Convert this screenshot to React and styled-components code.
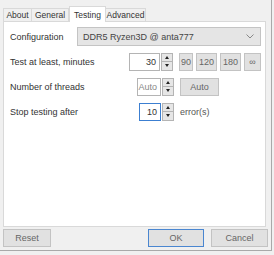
import React from "react";
import styled, { createGlobalStyle } from "styled-components";

const GlobalStyle = createGlobalStyle`
  html, body {
    margin: 0;
    padding: 0;
    background: #f0f0f0;
  }
  body {
    font-family: "Liberation Sans", Arial, sans-serif;
    font-size: 9px;
    color: #333;
  }
`;

const Window = styled.div`
  width: 271px;
  height: 250px;
  border-right: 1px solid #a9a9a9;
  border-bottom: 1px solid #a9a9a9;
  display: flex;
  flex-direction: column;
  background: #f0f0f0;
`;

const TabStrip = styled.div`
  height: 21px;
  display: flex;
  align-items: flex-end;
  padding-left: 3px;
`;

const Tab = styled.div`
  width: ${(p) => p.w}px;
  height: ${(p) => (p.active ? 16 : 13)}px;
  box-sizing: border-box;
  display: flex;
  align-items: center;
  justify-content: center;
  font-size: 8.5px;
  border: 1px solid #d9d9d9;
  border-bottom: none;
  border-left-width: ${(p) => (p.first || p.active ? 1 : 0)}px;
  background: ${(p) => (p.active ? "#fff" : "#f0f0f0")};
  margin-bottom: ${(p) => (p.active ? -1 : 0)}px;
  position: relative;
  z-index: ${(p) => (p.active ? 1 : 0)};
`;

const Panel = styled.div`
  margin: 0 5px 0 3px;
  height: 199px;
  background: #fff;
  border: 1px solid #d9d9d9;
  padding: 5px 4px 0 6px;
  display: flex;
  flex-direction: column;
  gap: 6px;
`;

const Row = styled.div`
  display: flex;
  align-items: center;
  height: 19px;
`;

const Label = styled.div`
  width: ${(p) => p.w || 119}px;
  flex-shrink: 0;
`;

const Select = styled.div`
  flex: 1;
  height: 17px;
  background: #e5e5e5;
  border: 1px solid #c4c4c4;
  display: flex;
  align-items: center;
  justify-content: space-between;
  padding: 0 6px 0 5px;
  color: #444;
`;

const SpinBox = styled.div`
  width: 45px;
  display: flex;
  justify-content: flex-end;
  align-items: center;
  gap: 1px;
`;

const Field = styled.div`
  width: ${(p) => p.w}px;
  height: 18px;
  border: 1px solid ${(p) => (p.focused ? "#3c7fd1" : "#b4b4b4")};
  display: flex;
  align-items: center;
  justify-content: flex-end;
  padding-right: 3px;
  box-sizing: border-box;
  color: ${(p) => (p.dim ? "#888" : "#333")};
  background: #fff;
`;

const Spinner = styled.div`
  width: 12px;
  height: 18px;
  display: flex;
  flex-direction: column;
`;

const SpinHalf = styled.div`
  flex: 1;
  background: #e6e6e6;
  border: 1px solid #b4b4b4;
  border-top-width: ${(p) => (p.down ? 0 : 1)}px;
  display: flex;
  align-items: center;
  justify-content: center;
`;

const Arrow = styled.div`
  width: 0;
  height: 0;
  border-left: 2.5px solid transparent;
  border-right: 2.5px solid transparent;
  ${(p) =>
    p.down
      ? "border-top: 3px solid #222;"
      : "border-bottom: 3px solid #222;"}
`;

const Button = styled.div`
  height: 18px;
  width: ${(p) => p.w}px;
  box-sizing: border-box;
  background: #e1e1e1;
  border: 1px solid ${(p) => (p.primary ? "#4a86d0" : "#c3c3c3")};
  display: flex;
  align-items: center;
  justify-content: center;
  color: #666;
`;

const ButtonGroup = styled.div`
  display: flex;
  gap: 3px;
  margin-left: 6px;
`;

const Unit = styled.div`
  margin-left: 6px;
  color: #555;
`;

const Footer = styled.div`
  flex: 1;
  display: flex;
  align-items: center;
  padding: 0 3px 1px;
  gap: 7px;
`;

const Spacer = styled.div`
  flex: 1;
`;

function Spin() {
  return (
    <Spinner>
      <SpinHalf>
        <Arrow />
      </SpinHalf>
      <SpinHalf down>
        <Arrow down />
      </SpinHalf>
    </Spinner>
  );
}

export default function App() {
  return (
    <>
      <GlobalStyle />
      <Window>
        <TabStrip>
          <Tab first w={29}>About</Tab>
          <Tab w={37}>General</Tab>
          <Tab active w={37}>Testing</Tab>
          <Tab w={40}>Advanced</Tab>
        </TabStrip>
        <Panel>
          <Row>
            <Label w={67}>Configuration</Label>
            <Select>
              <span>DDR5 Ryzen3D @ anta777</span>
              <svg width="8" height="5" viewBox="0 0 8 5">
                <path d="M0.5 0.5 L4 4 L7.5 0.5" fill="none" stroke="#888" strokeWidth="1" />
              </svg>
            </Select>
          </Row>
          <Row>
            <Label>Test at least, minutes</Label>
            <SpinBox>
              <Field w={31}>30</Field>
              <Spin />
            </SpinBox>
            <ButtonGroup>
              <Button w={14}>90</Button>
              <Button w={21}>120</Button>
              <Button w={21}>180</Button>
              <Button w={17}>∞</Button>
            </ButtonGroup>
          </Row>
          <Row>
            <Label>Number of threads</Label>
            <SpinBox>
              <Field w={24} dim>Auto</Field>
              <Spin />
            </SpinBox>
            <ButtonGroup>
              <Button w={39}>Auto</Button>
            </ButtonGroup>
          </Row>
          <Row>
            <Label>Stop testing after</Label>
            <SpinBox>
              <Field w={22} focused>10</Field>
              <Spin />
            </SpinBox>
            <Unit>error(s)</Unit>
          </Row>
        </Panel>
        <Footer>
          <Button w={48}>Reset</Button>
          <Spacer />
          <Button w={56} primary>OK</Button>
          <Button w={57}>Cancel</Button>
        </Footer>
      </Window>
    </>
  );
}
